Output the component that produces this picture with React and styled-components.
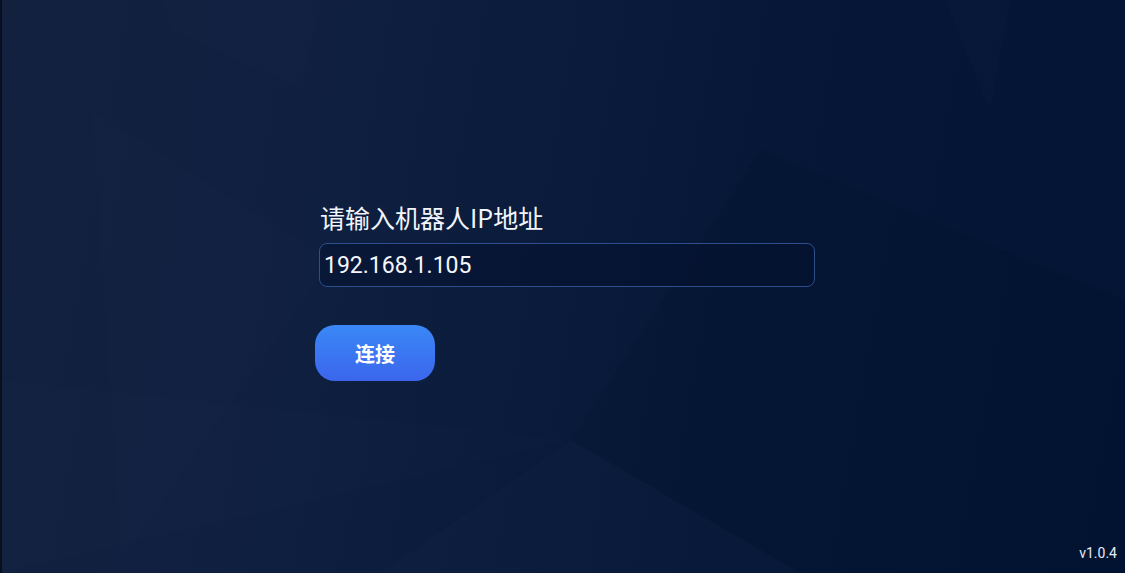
import React from 'react';
import styled, { createGlobalStyle } from 'styled-components';

const GlobalStyle = createGlobalStyle`
  html, body {
    margin: 0;
    padding: 0;
    height: 100%;
  }
  body {
    font-family: "Roboto", "Noto Sans CJK SC", sans-serif;
    background: #0b1a3a;
  }
  #root {
    height: 100%;
  }
`;

const Screen = styled.div`
  position: relative;
  width: 1125px;
  height: 573px;
  overflow: hidden;
  background: linear-gradient(100deg, #13213f 0%, #0f1f40 30%, #061737 65%, #031434 100%);
  border-left: 2px solid #080f1e;
  box-sizing: border-box;
  display: flex;
  justify-content: center;
  padding-top: 201px;
`;

const Backdrop = styled.svg`
  position: absolute;
  inset: 0;
  width: 100%;
  height: 100%;
  pointer-events: none;
`;

const Form = styled.div`
  position: relative;
  width: 500px;
  margin-left: 3px;
  display: flex;
  flex-direction: column;
  align-items: flex-start;
`;

const Label = styled.div`
  margin-left: 5px;
  color: #f2f5fb;
  font-size: 25px;
  line-height: 33px;
  font-family: "Noto Sans CJK SC", "Roboto", sans-serif;
`;

const Input = styled.input`
  box-sizing: border-box;
  margin: 9px 0 0 4px;
  width: 496px;
  height: 44px;
  padding: 0 4px;
  border: 1px solid #2d4f8e;
  border-radius: 8px;
  background: rgba(4, 16, 44, 0.45);
  color: #f4f6fb;
  font-family: "Roboto", "Noto Sans CJK SC", sans-serif;
  font-size: 23px;
  outline: none;
`;

const ConnectButton = styled.button`
  margin-top: 38px;
  width: 120px;
  height: 56px;
  border: none;
  border-radius: 20px;
  background: linear-gradient(180deg, #3a88f6 0%, #3b66ec 100%);
  color: #ffffff;
  font-family: "Noto Sans CJK SC", sans-serif;
  font-size: 20px;
  font-weight: 600;
  cursor: pointer;
`;

const Version = styled.div`
  position: absolute;
  right: 8px;
  bottom: 12px;
  color: #e6ebf5;
  font-family: "Roboto", sans-serif;
  font-size: 14px;
`;

export default function App() {
  return (
    <>
      <GlobalStyle />
      <Screen>
        <Backdrop viewBox="0 0 1125 573" preserveAspectRatio="none">
          <polygon points="160,0 320,0 300,90 170,30" fill="#ffffff" opacity="0.008" />
          <polygon points="570,440 800,573 380,573" fill="#ffffff" opacity="0.012" />
          <polygon points="0,380 570,440 0,573" fill="#ffffff" opacity="0.006" />
          <polygon points="570,440 760,150 1125,300 1125,573 800,573" fill="#000000" opacity="0.04" />
          <polygon points="945,0 1010,0 990,110" fill="#ffffff" opacity="0.01" />
          <polygon points="90,110 330,260 120,560" fill="#ffffff" opacity="0.006" />
        </Backdrop>
        <Form>
          <Label>请输入机器人IP地址</Label>
          <Input defaultValue="192.168.1.105" />
          <ConnectButton>连接</ConnectButton>
        </Form>
        <Version>v1.0.4</Version>
      </Screen>
    </>
  );
}
